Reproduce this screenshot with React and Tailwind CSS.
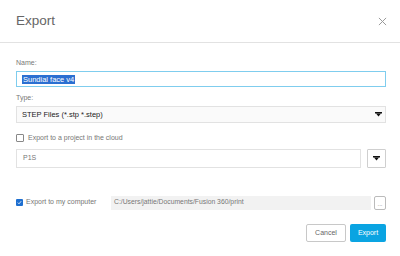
import React from "react";

const font = { fontFamily: '"Liberation Sans", Arial, sans-serif' };

function Caret() {
  return (
    <svg width="7" height="5" viewBox="0 0 7 5">
      <rect x="0" y="0" width="7" height="1.5" fill="#111" />
      <polygon points="1,1.5 6,1.5 3.5,4.5" fill="#111" />
    </svg>
  );
}

export default function App() {
  return (
    <div className="w-[400px] h-[256px] bg-white text-[#555]" style={font}>
      {/* header */}
      <div className="h-[43px] flex items-center justify-between pl-4 pr-[13px] border-b border-[#e2e2e2]">
        <span className="text-[13.5px] text-[#666] mt-[1px]">Export</span>
        <svg width="9" height="9" viewBox="0 0 10 10" className="mt-[1px]">
          <path d="M1 1L9 9M9 1L1 9" stroke="#999" strokeWidth="1.1" />
        </svg>
      </div>

      <div className="pl-4 pr-[14px] pt-[15px]">
        <div className="text-[7px] text-[#777] leading-[9px]">Name:</div>
        <div className="mt-[4px] h-[16px] border border-[#7fcdee] flex items-center px-[5px]">
          <span className="text-[7.5px] bg-[#2b6fd1] text-white leading-[9px] px-[1px]">
            Sundial face v4
          </span>
        </div>

        <div className="mt-[6px] text-[7px] text-[#777] leading-[9px]">Type:</div>
        <div className="mt-[4px] h-[17px] border border-[#e2e2e2] bg-[#fafafa] flex items-center justify-between pl-[5px] pr-[3px]">
          <span className="text-[7.5px] text-[#222]">STEP Files (*.stp *.step)</span>
          <Caret />
        </div>

        <div className="mt-[10px] flex items-center gap-[4px] h-[10px]">
          <span className="w-[8px] h-[8px] border border-[#888] rounded-[1px] bg-white" />
          <span className="text-[7px] text-[#777]">Export to a project in the cloud</span>
        </div>

        <div className="mt-[6px] flex items-center gap-[6px]">
          <div className="flex-1 h-[19px] border border-[#e2e2e2] flex items-center px-[6px]">
            <span className="text-[7px] text-[#777]">P1S</span>
          </div>
          <div className="w-[19px] h-[19px] border border-[#cfcfcf] rounded-[1px] flex items-center justify-center">
            <Caret />
          </div>
        </div>

        <div className="mt-[27px] flex items-center h-[15px]">
          <span className="w-[7px] h-[7px] bg-[#1e6fd0] rounded-[1px] flex items-center justify-center">
            <svg width="5" height="5" viewBox="0 0 5 5">
              <path d="M0.8 2.6L2 3.8L4.2 1.2" stroke="#fff" strokeWidth="0.8" fill="none" />
            </svg>
          </span>
          <span className="ml-[3px] text-[7px] text-[#777] w-[85px]">Export to my computer</span>
          <div className="flex-1 h-[14px] bg-[#f2f2f2] flex items-center px-[3px]">
            <span className="text-[6.8px] text-[#777]">C:/Users/jattie/Documents/Fusion 360/print</span>
          </div>
          <div className="ml-[3px] w-[12px] h-[14px] border border-[#bbb] rounded-[2px] flex items-end justify-center pb-[2px]">
            <span className="text-[6px] leading-[6px] text-[#777]">...</span>
          </div>
        </div>

        <div className="mt-[14px] flex justify-end gap-[4px]">
          <button className="w-[40px] h-[18px] border border-[#c8c8c8] rounded-[2px] bg-white text-[7px] text-[#666]">
            Cancel
          </button>
          <button className="w-[36px] h-[18px] rounded-[2px] bg-[#0aa4e2] text-[7px] text-white">
            Export
          </button>
        </div>
      </div>
    </div>
  );
}
